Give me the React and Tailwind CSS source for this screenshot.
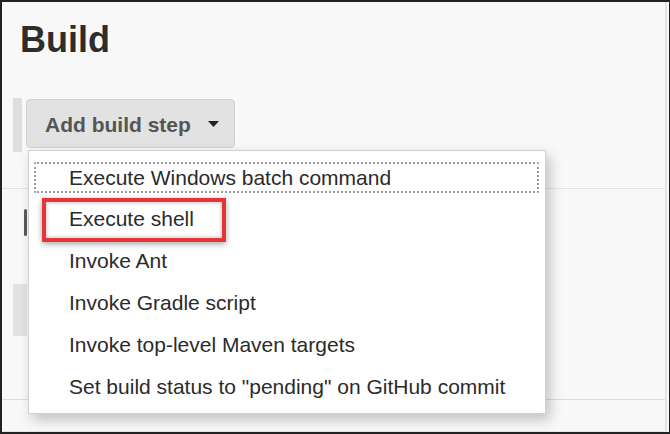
export default function App() {
  const items = [
    "Execute shell",
    "Invoke Ant",
    "Invoke Gradle script",
    "Invoke top-level Maven targets",
    'Set build status to "pending" on GitHub commit',
  ];
  return (
    <div className="relative w-[670px] h-[434px] overflow-hidden border-t-2 border-l-2 border-b-2 border-r border-[#222] bg-[#f8f8f8] font-['Liberation_Sans',Arial,sans-serif]">
      <div className="w-[665px] h-full border-r-2 border-b border-[#e4e4e4] flex flex-col">
        <h1 className="pl-[18px] pt-[20px] text-[36px] leading-[36px] font-bold text-[#2d2d2d]">Build</h1>
        <div className="flex items-start pl-[11px] mt-[40px]">
          <div className="w-[9px] h-[54px] bg-[#dedede]" />
          <div className="ml-[4px] mt-[1px] h-[49px] w-[209px] rounded-[4px] border border-[#d2d2d2] bg-[#e2e2e2] flex items-center pl-[18px] pt-[3px]">
            <span className="text-[21px] font-bold text-[#555]">Add build step</span>
            <svg width="11" height="6" viewBox="0 0 11 6" className="ml-[17px] mt-[-2px]">
              <polygon points="0,0 11,0 5.5,6" fill="#222" />
            </svg>
          </div>
        </div>
        <div className="mt-[36px] border-t border-[#e2e2e2]" />
        <div className="ml-[22px] mt-[20px] w-[3px] h-[27px] rounded-sm bg-[#5a5a5a]" />
        <div className="ml-[11px] mt-[48px] w-[14px] h-[52px] bg-[#e2e2e2]" />
        <div className="mt-[63px] border-t border-[#d6e2cf]" />
      </div>

      <div className="absolute left-[26px] top-[148px] w-[518px] h-[264px] bg-white border border-[#d0d0d0] pt-[5px] shadow-[4px_6px_12px_rgba(0,0,0,0.22)] text-[21px] text-[#2b2b2b]">
        <div className="h-[42px] pt-[6px]">
          <div className="ml-[5px] mr-[6px] h-[31px] border-2 border-dotted border-[#9a9a9a] rounded-[2px] flex items-center pl-[33px]">
            Execute Windows batch command
          </div>
        </div>
        {items.map((t) => (
          <div key={t} className="h-[42px] flex items-center pl-[40px]">
            {t}
          </div>
        ))}
      </div>

      <div className="absolute left-[40px] top-[196px] w-[184px] h-[44px] border-[4px] border-[#e5343a] shadow-[0_2px_6px_rgba(0,0,0,0.35),inset_0_0_4px_rgba(0,0,0,0.3)]" />
    </div>
  );
}
